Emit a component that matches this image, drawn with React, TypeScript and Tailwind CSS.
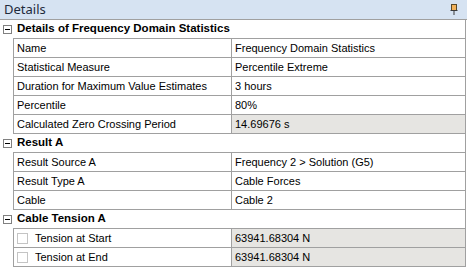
import React from "react";

type Row =
  | { kind: "group"; label: string }
  | { kind: "item"; label: string; value: string; readOnly?: boolean; check?: boolean };

const rows: Row[] = [
  { kind: "group", label: "Details of Frequency Domain Statistics" },
  { kind: "item", label: "Name", value: "Frequency Domain Statistics" },
  { kind: "item", label: "Statistical Measure", value: "Percentile Extreme" },
  { kind: "item", label: "Duration for Maximum Value Estimates", value: "3 hours" },
  { kind: "item", label: "Percentile", value: "80%" },
  { kind: "item", label: "Calculated Zero Crossing Period", value: "14.69676 s", readOnly: true },
  { kind: "group", label: "Result A" },
  { kind: "item", label: "Result Source A", value: "Frequency 2 > Solution (G5)" },
  { kind: "item", label: "Result Type A", value: "Cable Forces" },
  { kind: "item", label: "Cable", value: "Cable 2" },
  { kind: "group", label: "Cable Tension A" },
  { kind: "item", label: "Tension at Start", value: "63941.68304 N", readOnly: true, check: true },
  { kind: "item", label: "Tension at End", value: "63941.68304 N", readOnly: true, check: true },
];

function PinIcon() {
  return (
    <svg width="8" height="11" viewBox="0 0 8 11">
      <rect x="1.5" y="0.5" width="5" height="6" fill="#f2b25b" stroke="#5a4a2a" />
      <rect x="0.5" y="6" width="7" height="1" fill="#3b3b3b" />
      <rect x="3.5" y="7" width="1" height="4" fill="#3b3b3b" />
    </svg>
  );
}

function MinusBox() {
  return (
    <div className="w-[9px] h-[9px] border border-[#808080] bg-white flex items-center justify-center">
      <div className="w-[5px] h-px bg-black" />
    </div>
  );
}

export default function App() {
  return (
    <div className="w-[467px] h-[268px] bg-white overflow-hidden" style={{ fontFamily: '"Liberation Sans", Arial, sans-serif' }}>
      <div className="h-[20px] bg-[#d6e3f2] flex items-center justify-between pl-[4px] pr-[9px] border-b border-[#a0a0a0]">
        <span className="text-[13px] text-[#1e2b3c]" style={{ fontFamily: '"Noto Sans", sans-serif' }}>
          Details
        </span>
        <PinIcon />
      </div>
      <div className="w-[466px] flex flex-col text-[11px] text-black">
        {rows.map((r, i) =>
          r.kind === "group" ? (
            <div key={i} className="h-[19px] flex">
              <div className="w-[13px] flex items-center justify-center pl-px">
                <MinusBox />
              </div>
              <div className="flex-1 flex items-center pl-[4px] text-[11.5px] font-bold border-b border-r border-[#a0a0a0]">
                {r.label}
              </div>
            </div>
          ) : (
            <div key={i} className="h-[19px] flex">
              <div className="w-[13px]" />
              <div className="flex-1 flex border-l border-b border-r border-[#a0a0a0]">
                <div className="w-[218px] flex items-center pl-[3px] border-r border-[#a0a0a0]">
                  {r.check && (
                    <div className="w-[11px] h-[11px] border border-[#c4c4c4] bg-white mr-[7px]" />
                  )}
                  {r.label}
                </div>
                <div className={`flex-1 flex items-center pl-[3px] ${r.readOnly ? "bg-[#e6e5e2]" : ""}`}>
                  {r.value}
                </div>
              </div>
            </div>
          )
        )}
      </div>
    </div>
  );
}
